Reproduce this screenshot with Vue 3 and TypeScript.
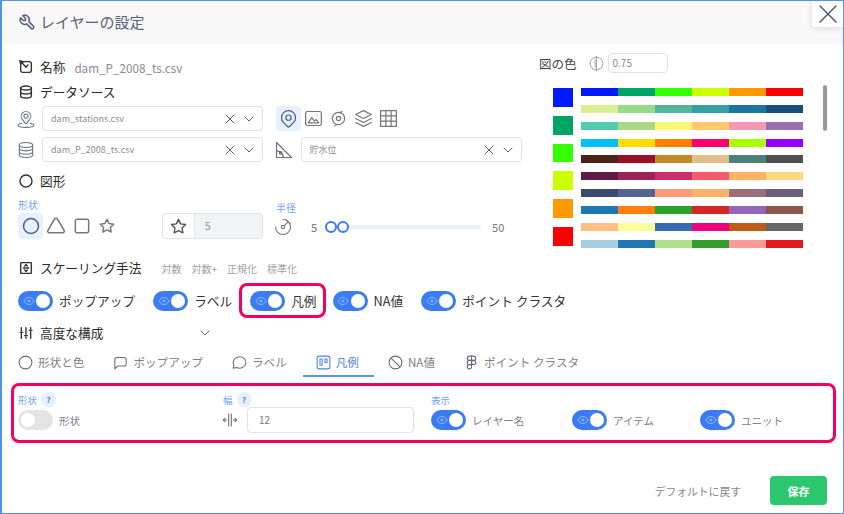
<script setup lang="ts">
const icons: Record<string, string[]> = {
  tool: ['M7 10h3v-3l-3.5 -3.5a6 6 0 0 1 8 8l6 6a2 2 0 0 1 -3 3l-6 -6a6 6 0 0 1 -8 -8l3.5 3.5'],
  pen: ['M8 4h9a3 3 0 0 1 3 3v10a3 3 0 0 1 -3 3h-10a3 3 0 0 1 -3 -3v-9', 'M3 3l9 9', 'M3 3l5 1l-4 4z', 'M12 12l3 -3'],
  pin: ['M9 11a3 3 0 1 0 6 0a3 3 0 0 0 -6 0', 'M17.657 16.657l-4.243 4.243a2 2 0 0 1 -2.827 0l-4.244 -4.243a8 8 0 1 1 11.314 0z'],
  pinBase: ['M9.5 8.5a2.5 2.5 0 1 0 5 0a2.5 2.5 0 0 0 -5 0', 'M16.2 12.7l-3.2 4.3a1.2 1.2 0 0 1 -2 0l-3.2 -4.3a5.8 5.8 0 1 1 8.4 0z', 'M7 17c-3 .6 -4.500 1.600 -4.500 2.500c0 1.500 4 2.500 9.500 2.500s9.500 -1 9.500 -2.500c0 -.9 -1.500 -1.900 -4.500 -2.500'],
  db: ['M4 6a8 3 0 1 0 16 0a8 3 0 1 0 -16 0', 'M4 6v12a8 3 0 0 0 16 0v-12', 'M4 10a8 3 0 0 0 16 0', 'M4 14a8 3 0 0 0 16 0'],
  db2: ['M4 6a8 3 0 1 0 16 0a8 3 0 1 0 -16 0', 'M4 6v12a8 3 0 0 0 16 0v-12', 'M4 12a8 3 0 0 0 16 0'],
  image: ['M5 4h14a2 2 0 0 1 2 2v12a2 2 0 0 1 -2 2h-14a2 2 0 0 1 -2 -2v-12a2 2 0 0 1 2 -2z', 'M6 17l4 -6l3 4l2 -2l3 4z', 'M16 8h.01'],
  target: ['M9.500 12a2.500 2.500 0 1 0 5 0a2.500 2.500 0 1 0 -5 0', 'M5 12a7 7 0 1 0 14 0a7 7 0 1 0 -14 0', 'M16 4l-2 1', 'M8 20l2 -1'],
  stack: ['M12 3l-9 4.500l9 4.500l9 -4.500l-9 -4.500', 'M3 12l9 4.500l9 -4.500', 'M3 16.500l9 4.500l9 -4.500'],
  grid: ['M3 3h18v18h-18z', 'M3 9h18', 'M3 15h18', 'M9 3v18', 'M15 3v18'],
  angle: ['M3 3v18h18z', 'M3 13a8 8 0 0 1 8 8', 'M6.500 15.500a1.500 1.500 0 1 0 3 0a1.500 1.500 0 0 0 -3 0'],
  x: ['M18 6l-12 12', 'M6 6l12 12'],
  chev: ['M6 9l6 6l6 -6'],
  circle: ['M3 12a9 9 0 1 0 18 0a9 9 0 1 0 -18 0'],
  triangle: ['M10.363 3.591l-8.106 13.534a1.914 1.914 0 0 0 1.636 2.871h16.214a1.914 1.914 0 0 0 1.636 -2.87l-8.106 -13.536a1.914 1.914 0 0 0 -3.274 0z'],
  square: ['M6 4h12a2 2 0 0 1 2 2v12a2 2 0 0 1 -2 2h-12a2 2 0 0 1 -2 -2v-12a2 2 0 0 1 2 -2z'],
  star: ['M12 17.75l-6.172 3.245l1.179 -6.873l-5 -4.867l6.9 -1l3.086 -6.253l3.086 6.253l6.9 1l-5 4.867l1.179 6.873z'],
  gauge: ['M3 12a9 9 0 1 0 18 0a9 9 0 0 0 -9 -9', 'M10 12a2 2 0 1 0 4 0a2 2 0 0 0 -4 0', 'M13.500 10.500l4 -4', 'M16 3.500l4.500 4.500'],
  scale: ['M5 4h14a1 1 0 0 1 1 1v14a1 1 0 0 1 -1 1h-14a1 1 0 0 1 -1 -1v-14a1 1 0 0 1 1 -1z', 'M8 12h8', 'M12 7l2 2', 'M12 7l-2 2', 'M12 17l2 -2', 'M12 17l-2 -2'],
  eye: ['M10 12a2 2 0 1 0 4 0a2 2 0 0 0 -4 0', 'M22 12c-2.667 4.667 -6 7 -10 7s-7.333 -2.333 -10 -7c2.667 -4.667 6 -7 10 -7s7.333 2.333 10 7'],
  sliders: ['M5 4v5', 'M5 13v7', 'M3 11h4', 'M12 4v10', 'M12 18v2', 'M10 16h4', 'M19 4v2', 'M19 10v10', 'M17 8h4'],
  popup: ['M4 21v-13a3 3 0 0 1 3 -3h10a3 3 0 0 1 3 3v6a3 3 0 0 1 -3 3h-9l-4 4'],
  bubble: ['M3 20l1.300 -3.900a9 8 0 1 1 3.400 2.900l-4.700 1'],
  trello: ['M6 3h12a3 3 0 0 1 3 3v12a3 3 0 0 1 -3 3h-12a3 3 0 0 1 -3 -3v-12a3 3 0 0 1 3 -3z', 'M7 7h3v9h-3z', 'M14 7h3v5h-3z'],
  ban: ['M3 12a9 9 0 1 0 18 0a9 9 0 1 0 -18 0', 'M5.700 5.700l12.600 12.600'],
  figma: ['M12 12a3 3 0 1 0 6 0a3 3 0 1 0 -6 0', 'M9 3h6a3 3 0 0 1 0 6h-6a3 3 0 0 1 0 -6z', 'M9 9a3 3 0 0 0 0 6h3m-3 0a3 3 0 1 0 3 3v-15'],
  width: ['M10 3v18', 'M14 3v18', 'M7 12h-5', 'M22 12h-5', 'M4.500 9.500l-2.500 2.500l2.500 2.500', 'M19.500 9.500l2.500 2.500l-2.500 2.500'],
  halfCircle: ['M3 12a9 9 0 1 0 18 0a9 9 0 1 0 -18 0', 'M12 2v20', 'M10 7v10']
}

const swatches = ['#0019ff', '#00a464', '#33ff00', '#ccff00', '#ff9900', '#ff0000']
const palettes: string[][] = [
  ['#0019ff', '#00a464', '#33ff00', '#ccff00', '#ff9900', '#ff0000'],
  ['#d9ed92', '#99d98c', '#52b69a', '#34a0a4', '#1a759f', '#184e77'],
  ['#57cbaf', '#acd884', '#f9f871', '#ffc96f', '#f499b3', '#9871b0'],
  ['#00bfff', '#ffdd00', '#ff7f00', '#ff006e', '#aaff00', '#9500ff'],
  ['#4a2419', '#9a0e26', '#c48a28', '#e0c088', '#4d8077', '#4f4f4f'],
  ['#5f1a46', '#9c2458', '#cf2d68', '#f55c6b', '#ffb261', '#ffd77e'],
  ['#3d4a70', '#556490', '#ff9a7a', '#ffb06a', '#9b6f78', '#6b5f7b'],
  ['#1f77b4', '#ff7f0e', '#2ca02c', '#d62728', '#9467bd', '#8c564b'],
  ['#fdc086', '#ffff99', '#386cb0', '#f0027f', '#bf5b17', '#666666'],
  ['#a6cee3', '#1f78b4', '#b2df8a', '#33a02c', '#fb9a99', '#e31a1c']
]

const toggles = [
  { label: 'ポップアップ', hl: false },
  { label: 'ラベル', hl: false },
  { label: '凡例', hl: true },
  { label: 'NA値', hl: false },
  { label: 'ポイント クラスタ', hl: false }
]
const tabs = [
  { label: '形状と色', icon: 'circle', active: false },
  { label: 'ポップアップ', icon: 'popup', active: false },
  { label: 'ラベル', icon: 'bubble', active: false },
  { label: '凡例', icon: 'trello', active: true },
  { label: 'NA値', icon: 'ban', active: false },
  { label: 'ポイント クラスタ', icon: 'figma', active: false }
]
const scales = ['対数', '対数+', '正規化', '標準化']
const showItems = [
  { label: 'レイヤー名', width: 141 },
  { label: 'アイテム', width: 128 },
  { label: 'ユニット', width: 90 }
]
</script>

<template>
  <div class="frame">
    <header class="head">
      <svg class="ic title-ic" viewBox="0 0 24 24"><path v-for="d in icons.tool" :key="d" :d="d" /></svg>
      <span class="title">レイヤーの設定</span>
      <button class="close"><svg class="ic close-ic" viewBox="0 0 24 24"><path v-for="d in icons.x" :key="d" :d="d" /></svg></button>
    </header>

    <div class="top">
      <section class="left">
        <div class="sec first">
          <svg class="ic sec-ic" viewBox="0 0 24 24"><path v-for="d in icons.pen" :key="d" :d="d" /></svg>
          <span class="sec-title">名称</span>
          <span class="file">dam_P_2008_ts.csv</span>
        </div>
        <div class="sec mt5">
          <svg class="ic sec-ic" viewBox="0 0 24 24"><path v-for="d in icons.db2" :key="d" :d="d" /></svg>
          <span class="sec-title">データソース</span>
        </div>

        <div class="src-row mt4">
          <svg class="ic src-ic" viewBox="0 0 24 24"><path v-for="d in icons.pinBase" :key="d" :d="d" /></svg>
          <div class="select s1">
            <span>dam_stations.csv</span>
            <svg class="ic sel-x" viewBox="0 0 24 24"><path v-for="d in icons.x" :key="d" :d="d" /></svg>
            <svg class="ic sel-c" viewBox="0 0 24 24"><path v-for="d in icons.chev" :key="d" :d="d" /></svg>
          </div>
          <div class="types">
            <span class="type active"><svg class="ic type-ic accent" viewBox="0 0 24 24"><path v-for="d in icons.pin" :key="d" :d="d" /></svg></span>
            <span class="type"><svg class="ic type-ic" viewBox="0 0 24 24"><path v-for="d in icons.image" :key="d" :d="d" /></svg></span>
            <span class="type"><svg class="ic type-ic" viewBox="0 0 24 24"><path v-for="d in icons.target" :key="d" :d="d" /></svg></span>
            <span class="type"><svg class="ic type-ic" viewBox="0 0 24 24"><path v-for="d in icons.stack" :key="d" :d="d" /></svg></span>
            <span class="type"><svg class="ic type-ic" viewBox="0 0 24 24"><path v-for="d in icons.grid" :key="d" :d="d" /></svg></span>
          </div>
        </div>
        <div class="src-row mt6">
          <svg class="ic src-ic" viewBox="0 0 24 24"><path v-for="d in icons.db" :key="d" :d="d" /></svg>
          <div class="select s1">
            <span>dam_P_2008_ts.csv</span>
            <svg class="ic sel-x" viewBox="0 0 24 24"><path v-for="d in icons.x" :key="d" :d="d" /></svg>
            <svg class="ic sel-c" viewBox="0 0 24 24"><path v-for="d in icons.chev" :key="d" :d="d" /></svg>
          </div>
          <svg class="ic angle-ic" viewBox="0 0 24 24"><path v-for="d in icons.angle" :key="d" :d="d" /></svg>
          <div class="select s2">
            <span>貯水位</span>
            <svg class="ic sel-x" viewBox="0 0 24 24"><path v-for="d in icons.x" :key="d" :d="d" /></svg>
            <svg class="ic sel-c" viewBox="0 0 24 24"><path v-for="d in icons.chev" :key="d" :d="d" /></svg>
          </div>
        </div>

        <div class="sec mt9">
          <svg class="ic sec-ic" viewBox="0 0 24 24"><path v-for="d in icons.circle" :key="d" :d="d" /></svg>
          <span class="sec-title">図形</span>
        </div>

        <div class="shape-row">
          <div class="shape-col">
            <div class="blue-label">形状</div>
            <div class="shape-line">
              <div class="shapes">
                <span class="shape active"><svg class="ic shape-ic accent" viewBox="0 0 24 24"><path v-for="d in icons.circle" :key="d" :d="d" /></svg></span>
                <svg class="ic shape-ic" viewBox="0 0 24 24"><path v-for="d in icons.triangle" :key="d" :d="d" /></svg>
                <svg class="ic shape-ic" viewBox="0 0 24 24"><path v-for="d in icons.square" :key="d" :d="d" /></svg>
                <svg class="ic shape-ic star-sm" viewBox="0 0 24 24"><path v-for="d in icons.star" :key="d" :d="d" /></svg>
              </div>
              <div class="star-input">
                <span class="addon"><svg class="ic addon-ic" viewBox="0 0 24 24"><path v-for="d in icons.star" :key="d" :d="d" /></svg></span>
                <span class="star-val">5</span>
              </div>
            </div>
          </div>
          <div class="radius-col">
            <div class="blue-label">半径</div>
            <div class="slider-line">
              <svg class="ic gauge-ic" viewBox="0 0 24 24"><path v-for="d in icons.gauge" :key="d" :d="d" /></svg>
              <span class="num n5">5</span>
              <div class="track">
                <span class="handle h1"></span>
                <span class="handle h2"></span>
              </div>
              <span class="num n50">50</span>
            </div>
          </div>
        </div>

        <div class="sec scale-sec">
          <svg class="ic sec-ic" viewBox="0 0 24 24"><path v-for="d in icons.scale" :key="d" :d="d" /></svg>
          <span class="sec-title">スケーリング手法</span>
          <div class="scales"><span v-for="s in scales" :key="s">{{ s }}</span></div>
        </div>

        <div class="toggle-row">
          <div v-for="t in toggles" :key="t.label" class="tg-item" :class="{ hl: t.hl }">
            <span class="toggle">
              <svg class="ic eye" viewBox="0 0 24 24"><path v-for="d in icons.eye" :key="d" :d="d" /></svg>
              <span class="knob"></span>
            </span>
            <span class="tg-label">{{ t.label }}</span>
          </div>
        </div>

        <div class="sec adv">
          <svg class="ic sec-ic" viewBox="0 0 24 24"><path v-for="d in icons.sliders" :key="d" :d="d" /></svg>
          <span class="sec-title">高度な構成</span>
          <svg class="ic adv-chev" viewBox="0 0 24 24"><path v-for="d in icons.chev" :key="d" :d="d" /></svg>
        </div>
      </section>

      <aside class="right">
        <div class="color-head">
          <span class="color-title">図の色</span>
          <svg class="ic op-ic" viewBox="0 0 24 24"><path v-for="d in icons.halfCircle" :key="d" :d="d" /></svg>
          <span class="op-input">0.75</span>
        </div>
        <div class="color-body">
          <div class="swatches">
            <span v-for="c in swatches" :key="c" class="swatch" :style="{ background: c }"></span>
          </div>
          <div class="palettes">
            <div v-for="(p, i) in palettes" :key="i" class="palette">
              <span v-for="c in p" :key="c" class="seg" :style="{ background: c }"></span>
            </div>
          </div>
          <div class="scroll"></div>
        </div>
      </aside>
    </div>

    <nav class="tabs">
      <div v-for="t in tabs" :key="t.label" class="tab" :class="{ active: t.active }">
        <svg class="ic tab-ic" viewBox="0 0 24 24"><path v-for="d in icons[t.icon]" :key="d" :d="d" /></svg>
        <span>{{ t.label }}</span>
      </div>
    </nav>

    <section class="redbox">
      <div class="rb-col c1">
        <div class="rb-label"><span>形状</span><i class="help">?</i></div>
        <div class="rb-line">
          <span class="toggle off"><span class="knob"></span></span>
          <span class="rb-text">形状</span>
        </div>
      </div>
      <div class="rb-col c2">
        <div class="rb-label"><span>幅</span><i class="help">?</i></div>
        <div class="rb-line">
          <svg class="ic width-ic" viewBox="0 0 24 24"><path v-for="d in icons.width" :key="d" :d="d" /></svg>
          <span class="w-input">12</span>
        </div>
      </div>
      <div class="rb-col c3">
        <div class="rb-label"><span>表示</span></div>
        <div class="rb-line">
          <div v-for="s in showItems" :key="s.label" class="show" :style="{ width: s.width + 'px' }">
            <span class="toggle">
              <svg class="ic eye" viewBox="0 0 24 24"><path v-for="d in icons.eye" :key="d" :d="d" /></svg>
              <span class="knob"></span>
            </span>
            <span class="rb-text">{{ s.label }}</span>
          </div>
        </div>
      </div>
    </section>

    <footer class="foot">
      <span class="reset">デフォルトに戻す</span>
      <button class="save">保存</button>
    </footer>
  </div>
</template>

<style>
html, body { margin: 0; background: #fff; }
</style>

<style scoped>
.frame {
  box-sizing: border-box;
  width: 844px;
  height: 514px;
  position: relative;
  overflow: hidden;
  display: flex;
  flex-direction: column;
  background: #fff;
  border: 1px solid #5b8fe6;
  border-left: 2px solid #4c93f2;
  border-top: 1px solid #4c93f2;
  font-family: "Noto Sans CJK JP", "Noto Sans", sans-serif;
  color: #3f3f46;
}
.ic {
  display: block;
  flex: none;
  fill: none;
  stroke: currentColor;
  stroke-width: 2;
  stroke-linecap: round;
  stroke-linejoin: round;
}
.accent { color: #4f5b93; }

.head {
  box-sizing: border-box;
  height: 43px;
  flex: none;
  display: flex;
  align-items: center;
  padding: 0 0 1px 16px;
  background: #f8f8f8;
  color: #5c5f77;
}
.title-ic { width: 18px; height: 18px; margin-right: 4px; }
.title { font-size: 15px; line-height: 20px; }
.close {
  position: absolute;
  top: 0;
  right: 0;
  width: 31px;
  height: 26px;
  padding: 0;
  border: 0;
  border-bottom-left-radius: 4px;
  background: #fff;
  box-shadow: 0 1px 6px rgba(0, 0, 0, .12);
  color: #55587a;
  display: flex;
  align-items: center;
  justify-content: center;
}
.close-ic { width: 32px; height: 32px; stroke-width: 1.1; flex: none; }

.top { display: flex; height: 303px; flex: none; }
.left { width: 521px; flex: none; padding-left: 16px; box-sizing: border-box; }
.right { flex: 1; padding-left: 16px; }

.sec { display: flex; align-items: center; height: 20px; color: #222; }
.first { margin-top: 13px; }
.mt4 { margin-top: 4px; }
.mt5 { margin-top: 5px; }
.mt6 { margin-top: 6px; }
.mt9 { margin-top: 9px; }
.sec-ic { width: 16px; height: 16px; margin-right: 6px; color: #333; stroke-width: 2.1; }
.sec-title { font-size: 12.700px; line-height: 18px; color: #2b2b2b; white-space: nowrap; }
.file { margin-left: 9px; font-size: 11.700px; color: #8a8a94; }

.src-row { display: flex; align-items: center; height: 25px; }
.src-ic { width: 20px; height: 20px; margin-left: -2px; margin-right: 6px; color: #70727f; stroke-width: 1.3; }
.select {
  box-sizing: border-box;
  height: 25px;
  display: flex;
  align-items: center;
  position: relative;
  border: 1px solid #dfe2ea;
  border-radius: 4px;
  padding-left: 8px;
  font-size: 9px;
  color: #8c8c94;
  background: #fff;
}
.select span { flex: 1; }
.s1 { width: 221px; }
.s2 { width: 221px; }
.sel-x { width: 16px; height: 16px; margin-right: 3px; color: #5c6070; stroke-width: 1.5; }
.sel-c { width: 16px; height: 16px; margin-right: 5px; color: #5c6070; stroke-width: 1.5; }
.types { display: flex; align-items: center; margin-left: 13px; }
.type { width: 25px; height: 25px; display: flex; align-items: center; justify-content: center; color: #777; }
.type.active { background: #e7f0fe; border-radius: 4px; }
.type-ic { width: 21px; height: 21px; stroke-width: 1.4; }
.angle-ic { width: 20px; height: 20px; margin-left: 10.500px; margin-right: 7px; color: #6d6d7c; stroke-width: 1.4; }

.shape-row { display: flex; align-items: flex-end; margin-top: 7px; height: 41px; }
.shape-col { width: 258px; flex: none; }
.blue-label { font-size: 10px; line-height: 14px; color: #6fa3f7; }
.shape-col .blue-label { height: 15px; }
.shape-line { display: flex; align-items: center; height: 26px; }
.shapes { display: flex; align-items: center; gap: 5.500px; width: 144px; color: #777; }
.shape { width: 25px; height: 26px; background: #e9f1fe; border-radius: 4px; display: flex; align-items: center; justify-content: center; margin-right: -2.500px; }
.shape-ic { width: 20px; height: 20px; stroke-width: 1.8; }
.shape-ic.star-sm { width: 16px; height: 16px; margin-left: 1.500px; stroke-width: 2.2; }
.star-input {
  box-sizing: border-box;
  display: flex;
  width: 101px;
  height: 26px;
  border: 1px solid #dfe2ea;
  border-radius: 4px;
  overflow: hidden;
}
.addon { width: 31px; display: flex; align-items: center; justify-content: center; color: #555; border-right: 1px solid #e4e6eb; }
.addon-ic { width: 17px; height: 17px; }
.star-val { flex: 1; background: #f1f3f5; padding-left: 10px; font-size: 10px; line-height: 24px; color: #8c8c94; }

.radius-col { flex: 1; }
.slider-line { display: flex; align-items: center; height: 24px; }
.gauge-ic { width: 20px; height: 20px; margin-left: -3.500px; margin-right: 18.500px; color: #777; stroke-width: 1.3; }
.num { font-size: 11px; color: #777; }
.n5 { margin-right: 8px; }
.n50 { margin-left: 11px; }
.track { position: relative; width: 156px; height: 4px; background: #e7f0fe; border-radius: 2px; }
.handle {
  position: absolute;
  top: -4px;
  box-sizing: border-box;
  width: 12px;
  height: 12px;
  border: 2px solid #3a7cf5;
  border-radius: 50%;
  background: #fff;
}
.h1 { left: 0; }
.h2 { left: 12px; }

.scale-sec { margin-top: 19px; }
.scales { display: flex; gap: 10px; margin-left: 20px; font-size: 10px; color: #a0a0a6; }

.toggle-row { display: flex; margin-top: 13px; gap: 18px; height: 20px; }
.tg-item { display: flex; align-items: center; position: relative; }
.tg-item.hl { margin-right: -2px; }
.tg-item.hl::after {
  content: "";
  position: absolute;
  inset: -8px -9px -7px -11px;
  border: 3px solid #f5005f;
  border-radius: 8px;
}
.tg-label { margin-left: 6px; font-size: 12.700px; line-height: 18px; color: #333; white-space: nowrap; }
.toggle {
  position: relative;
  flex: none;
  width: 35px;
  height: 20px;
  border-radius: 10px;
  background: #3b7cf4;
  display: block;
  color: #a3c1fa;
}
.toggle.off { background: #e4e4e4; }
.eye { position: absolute; left: 4.500px; top: 4px; width: 12px; height: 12px; stroke-width: 1.7; }
.knob {
  position: absolute;
  right: 3px;
  top: 3px;
  width: 14px;
  height: 14px;
  border-radius: 50%;
  background: #fff;
}
.off .knob { right: auto; left: 3px; top: 3px; width: 14px; height: 14px; }

.adv { margin-top: 12px; }
.adv-chev { width: 16px; height: 16px; margin-left: 94px; color: #666; stroke-width: 1.5; }

.color-head { display: flex; align-items: center; margin-top: 9px; height: 20px; }
.color-title { font-size: 12.500px; color: #444; }
.op-ic { width: 17px; height: 17px; margin-left: 11px; margin-right: 3px; color: #888; stroke-width: 1.1; }
.op-input {
  box-sizing: border-box;
  width: 60px;
  height: 20px;
  border: 1px solid #dfe2ea;
  border-radius: 4px;
  padding-left: 4px;
  font-size: 10px;
  line-height: 18px;
  color: #8c8c94;
}
.color-body { display: flex; margin-top: 15px; margin-left: 14px; }
.swatches { display: flex; flex-direction: column; gap: 9px; width: 20px; }
.swatch { display: block; width: 20px; height: 18.800px; }
.palettes { display: flex; flex-direction: column; gap: 8.850px; margin-left: 8px; width: 222px; }
.palette { display: flex; height: 8px; }
.seg { flex: 1; }
.scroll { width: 4px; height: 46px; margin-left: 20px; margin-top: -3px; border-radius: 2px; background: #999; }

.tabs { display: flex; height: 30px; margin-left: 3px; gap: 1px; flex: none; }
.tab {
  box-sizing: border-box;
  display: flex;
  align-items: center;
  gap: 4px;
  padding: 2px 15px 0 12px;
  height: 30px;
  font-size: 11.600px;
  color: #808088;
  white-space: nowrap;
  border-bottom: 2px solid transparent;
}
.tab.active { color: #4f83e8; border-bottom-color: #5b92f3; }
.tab-ic { width: 17px; height: 17px; stroke-width: 1.5; color: #6b6b78; }
.tab.active .tab-ic { color: #4f83e8; }

.redbox {
  box-sizing: border-box;
  margin: 6px 0 0 9px;
  width: 825px;
  height: 60px;
  flex: none;
  border: 3px solid #f5005f;
  border-radius: 8px;
  display: flex;
  padding: 6px 0 0 4px;
  position: relative;
}
.rb-col { display: flex; flex-direction: column; }
.c1 { width: 205px; }
.c2 { width: 208px; }
.rb-label { display: flex; align-items: center; gap: 4px; height: 15px; font-size: 9.500px; color: #6fa3f7; }
.help {
  width: 15px;
  height: 15px;
  border-radius: 50%;
  background: #e7f0fe;
  font-style: normal;
  font-weight: 700;
  font-size: 8px;
  line-height: 15px;
  text-align: center;
  color: #4f83e8;
}
.rb-line { display: flex; align-items: center; height: 20px; margin-top: 3px; }
.rb-text { margin-left: 6px; font-size: 10.500px; color: #808088; white-space: nowrap; }
.width-ic { width: 16px; height: 16px; margin-left: -1px; margin-right: 9px; color: #6b6b78; stroke-width: 1.6; }
.w-input {
  box-sizing: border-box;
  width: 167px;
  height: 26px;
  border: 1px solid #dfe2ea;
  border-radius: 4px;
  padding-left: 11px;
  font-size: 10px;
  line-height: 24px;
  color: #777;
}
.show { display: flex; align-items: center; }

.foot {
  position: absolute;
  right: 16px;
  bottom: 8px;
  display: flex;
  align-items: center;
}
.reset { font-size: 10.800px; color: #868690; margin-right: 29px; }
.save {
  width: 57px;
  height: 29px;
  border: 0;
  border-radius: 4px;
  background: #2bc76f;
  color: #fff;
  font-family: inherit;
  font-size: 11px;
  font-weight: 700;
}
</style>
